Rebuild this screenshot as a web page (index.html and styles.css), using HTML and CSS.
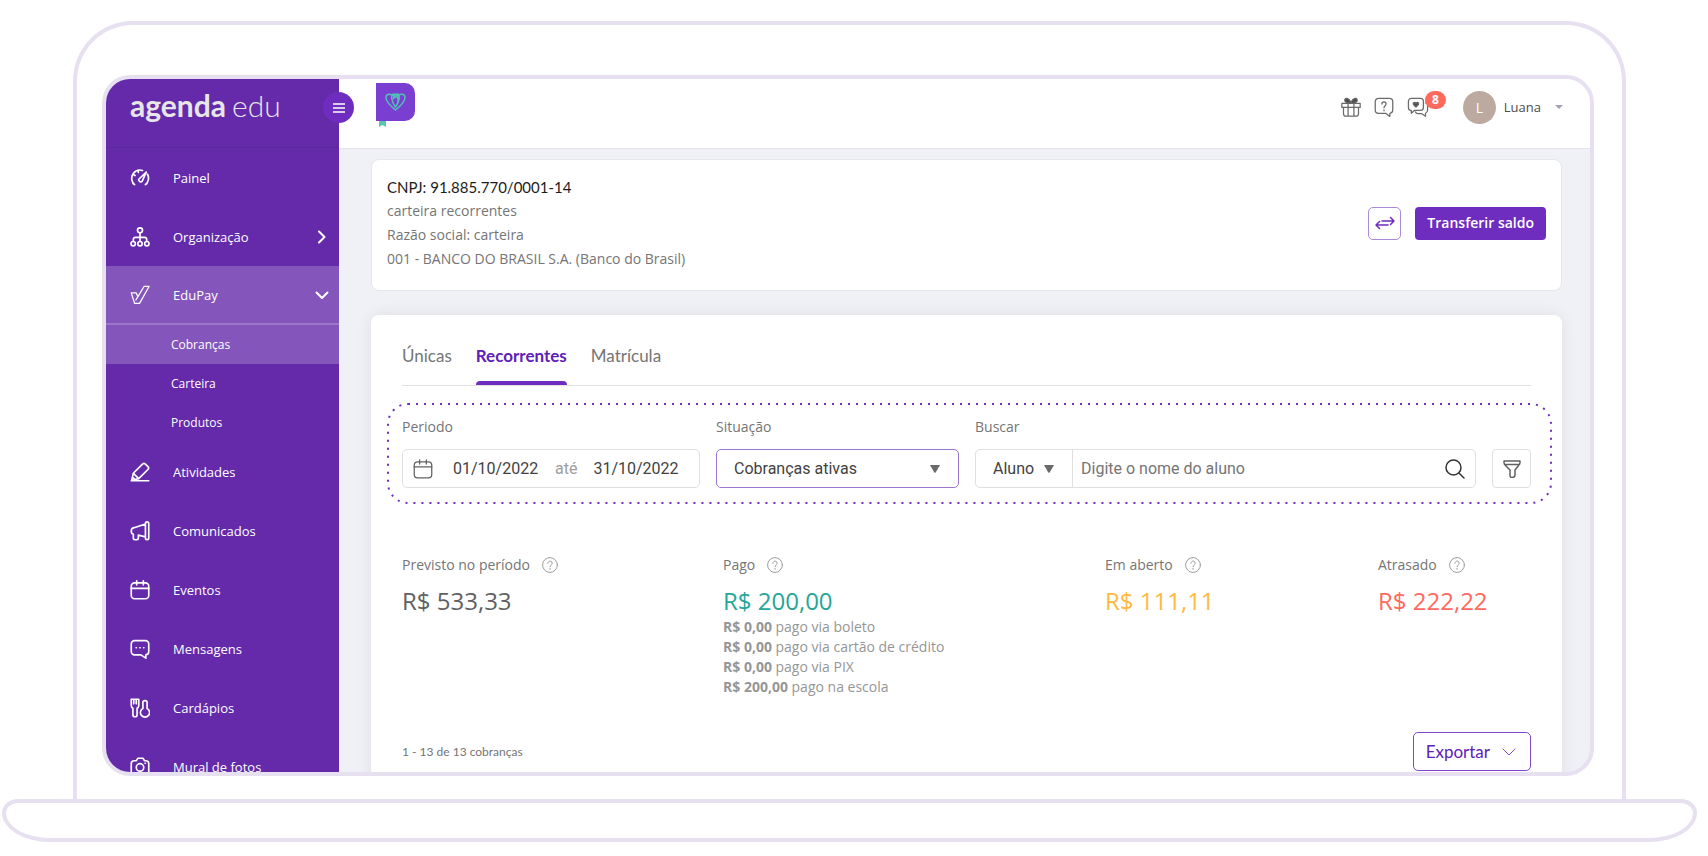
FILE: index.html
```
<!DOCTYPE html>
<html lang="pt-BR">
<head>
    <meta charset="UTF-8">
    <meta name="viewport" content="width=device-width, initial-scale=1.0">
    <title>Agenda Edu - Cobranças</title>
    <link rel="stylesheet" href="styles.css">
</head>
<body>
    <div class="laptop">
        <div class="lid">
            <div class="screen">
                <aside class="sidebar">
                    <div class="brand"><strong>agenda</strong><span>edu</span></div>
                    <button type="button" class="menu-toggle" aria-label="Menu">
                        <svg width="12" height="10" viewBox="0 0 12 10"><path d="M0 1h12M0 5h12M0 9h12"/></svg>
                    </button>
                    <nav>
                        <a href="#" class="nav-item">
                            <svg class="icon" viewBox="0 0 24 24"><path d="M5.500 20 3.600 18.600M5.500 20A10 10 0 0 1 4 6.500 10 10 0 0 1 15 3M18.500 20l1.900-1.400M18.500 20A10 10 0 0 0 21 7.500M10.500 13.500 19.500 5 14.500 16a2.500 2.500 0 0 1-4-2.500zM4.500 8l1.500 1M10 4v1.500"/></svg>
                            <span>Painel</span>
                        </a>
                        <a href="#" class="nav-item">
                            <svg class="icon" viewBox="0 0 24 24"><circle cx="12" cy="4" r="3"/><circle cx="3.800" cy="20" r="2.600"/><circle cx="12" cy="20" r="2.600"/><circle cx="20.200" cy="20" r="2.600"/><path d="M12 7v10.400M4 17.400V15a2.500 2.500 0 0 1 2.500-2.500h11A2.500 2.500 0 0 1 20 15v2.400"/></svg>
                            <span>Organização</span>
                            <svg class="chevron" viewBox="0 0 14 14"><path d="M4 1.500 9.500 7 4 12.500"/></svg>
                        </a>
                        <a href="#" class="nav-item active">
                            <svg class="icon thin" viewBox="0 0 24 24"><path d="M1.500 9.500h6L9.500 14 17 1.500h6L11.500 22H5.500zM9.500 14l-2.500 4"/></svg>
                            <span>EduPay</span>
                            <svg class="chevron" viewBox="0 0 14 14"><path d="M1.500 4.500 7 10l5.500-5.500"/></svg>
                        </a>
                        <div class="submenu">
                            <a href="#" class="active">Cobranças</a>
                            <a href="#">Carteira</a>
                            <a href="#">Produtos</a>
                        </div>
                        <a href="#" class="nav-item">
                            <svg class="icon" viewBox="0 0 24 24"><path d="M1.500 22.500h21M2 22l2-8.500L15 2.500a2.500 2.500 0 0 1 3.500 0l3 3a2.500 2.500 0 0 1 0 3.500L10.500 20 2 22zM4 13.500l6.500 6.500M3 18l3 3"/></svg>
                            <span>Atividades</span>
                        </a>
                        <a href="#" class="nav-item">
                            <svg class="icon" viewBox="0 0 24 24"><path d="M18.500 3.500 5 8a4 4 0 0 0-3.500 4c0 2 1 3.500 2.500 4v4.500a2 2 0 0 0 2 2h2a2 2 0 0 0 2-2V17l8.500 2M18.500 3a2 2 0 0 1 4 0v17.500a2 2 0 0 1-4 0z"/></svg>
                            <span>Comunicados</span>
                        </a>
                        <a href="#" class="nav-item">
                            <svg class="icon" viewBox="0 0 24 24"><rect x="1.500" y="3.500" width="21" height="19" rx="4"/><path d="M1.500 10h21M8 1v5M16 1v5"/></svg>
                            <span>Eventos</span>
                        </a>
                        <a href="#" class="nav-item">
                            <svg class="icon" viewBox="0 0 24 24"><path d="M5.500 2h13a4 4 0 0 1 4 4v9a4 4 0 0 1-3.500 4v4l-6-4H5.500a4 4 0 0 1-4-4V6a4 4 0 0 1 4-4zM7.300 10.500h.4M11.800 10.500h.4M16.300 10.500h.4"/></svg>
                            <span>Mensagens</span>
                        </a>
                        <a href="#" class="nav-item">
                            <svg class="icon" viewBox="0 0 24 24"><path d="M1.500 1.500h9v7.500a4 4 0 0 1-2 3.300V20a2.500 2.500 0 0 1-5 0v-7.700a4 4 0 0 1-2-3.300zM4.500 1.500V7M7.500 1.500V7M15.500 4.500a3 3 0 0 1 5 0v8a5.500 5.500 0 1 1-5 0z"/></svg>
                            <span>Cardápios</span>
                        </a>
                        <a href="#" class="nav-item">
                            <svg class="icon" viewBox="0 0 24 24"><path d="M5 4.500h2.500l2-3h6l2 3H19A3.500 3.500 0 0 1 22.500 8v11a3.500 3.500 0 0 1-3.500 3.500H5A3.500 3.500 0 0 1 1.500 19V8A3.500 3.500 0 0 1 5 4.500z"/><circle cx="12" cy="12.500" r="4.500"/><path d="M18 7.500h.5"/></svg>
                            <span>Mural de fotos</span>
                        </a>
                    </nav>
                </aside>

                <div class="content">
                    <header class="topbar">
                        <svg class="school-logo" width="39" height="45" viewBox="0 0 39 45">
                            <path d="M0 0h29a10 10 0 0 1 10 10v18a10 10 0 0 1-10 10H0z" fill="#7a3fd0"/>
                            <path d="M3 38h7v6l-3.500-2L3 44z" fill="#5cc6b4"/>
                            <path d="M19.500 27c-5-4-9.500-8-9.500-12.500 0-4.500 6-4.500 9.500 0 3.500-4.500 9.500-4.500 9.500 0 0 4.500-4.500 8.500-9.500 12.500zM19.500 24c-4-5-5-12-2-13 3 0 4 2 4.500 4.500.5 3-.5 6-2.500 8.500zM19.500 24c4-5 5-12 2-13-2 0-3.500 2-4 4.500" fill="none" stroke="#52bfb8" stroke-width="1.500"/>
                        </svg>
                        <div class="top-actions">
                            <button type="button" class="icon-button" aria-label="Presentes">
                                <svg width="20" height="20" viewBox="0 0 24 24"><path d="M1 7.500h22v5H1zM3 12.500h18V20a3 3 0 0 1-3 3H6a3 3 0 0 1-3-3zM8.500 7.500V23M15.500 7.500V23"/><path d="M12 7.500C8 7.500 4 6.500 4.500 3.500S9.500.5 12 6.500c2.500-6 7-6 7.500-3s-3.500 4-7.500 4z" fill="#4c4c4c"/></svg>
                            </button>
                            <button type="button" class="icon-button" aria-label="Ajuda">
                                <svg width="20" height="20" viewBox="0 0 24 24"><path d="M5.500 1.500h13a4 4 0 0 1 4 4v10a4 4 0 0 1-3.500 4v4l-5-4H5.500a4 4 0 0 1-4-4v-10a4 4 0 0 1 4-4zM9.500 8.500c0-3.500 5-3.500 5 0 0 2-2.500 2-2.500 4.500M12 15.500v1"/></svg>
                            </button>
                            <button type="button" class="icon-button" aria-label="Mensagens">
                                <svg width="22" height="20" viewBox="0 0 26 24"><path d="M5 1.500h11a3.500 3.500 0 0 1 3.500 3.500v7.500A3.500 3.500 0 0 1 16 16H9l-4 3.500V16a3.500 3.500 0 0 1-3.500-3.500V5A3.500 3.500 0 0 1 5 1.500zM22 7c2 0 2.500 1.500 2.500 3v6c0 2-1 3-2.500 3.500v3.500l-4.500-3H13c-1.500 0-2.500-.5-3-2"/><path d="M10.500 12 7.500 9c-1-2 1.500-3.500 3-1.500 1.500-2 4-.5 3 1.500z" fill="#4c4c4c"/></svg>
                                <span class="badge">8</span>
                            </button>
                            <button type="button" class="user">
                                <span class="avatar">L</span>
                                <span>Luana</span>
                                <svg width="8" height="4" viewBox="0 0 8 4"><path d="M0 0h8L4 4z" fill="#a0a3b5"/></svg>
                            </button>
                        </div>
                    </header>

                    <main>
                        <section class="card account">
                            <div class="account-info">
                                <h1>CNPJ: 91.885.770/0001-14</h1>
                                <p>carteira recorrentes</p>
                                <p>Razão social: carteira</p>
                                <p>001 - BANCO DO BRASIL S.A. (Banco do Brasil)</p>
                            </div>
                            <div class="account-actions">
                                <button type="button" class="swap-button" aria-label="Trocar carteira">
                                    <svg width="20" height="14" viewBox="0 0 20 14"><path d="M7 5h12M15.500 1.500 19 5l-3.500 3.500M13 9H1M4.500 5.500 1 9l3.500 3.500"/></svg>
                                </button>
                                <button type="button" class="primary-button">Transferir saldo</button>
                            </div>
                        </section>

                        <section class="card charges">
                            <div class="tabs">
                                <a href="#">Únicas</a>
                                <a href="#" class="active">Recorrentes</a>
                                <a href="#">Matrícula</a>
                            </div>

                            <form class="filters">
                                <svg class="filters-outline"><rect x="1" y="1" rx="20"/></svg>
                                <div class="field">
                                    <label for="start">Periodo</label>
                                    <div class="control period">
                                        <svg width="20" height="20" viewBox="0 0 24 24"><rect x="1.500" y="3.500" width="21" height="19" rx="4"/><path d="M1.500 9.500h21M8 1v5M16 1v5"/></svg>
                                        <input type="text" id="start" value="01/10/2022">
                                        <span>até</span>
                                        <input type="text" id="end" value="31/10/2022" aria-label="Fim do periodo">
                                    </div>
                                </div>
                                <div class="field">
                                    <label for="status">Situação</label>
                                    <div class="control status">
                                        <select id="status"><option>Cobranças ativas</option></select>
                                        <svg width="10" height="8" viewBox="0 0 10 8"><path class="arrow" d="M0 0h10L5.800 7.200a1 1 0 0 1-1.600 0z"/></svg>
                                    </div>
                                </div>
                                <div class="field">
                                    <label for="search">Buscar</label>
                                    <div class="control search">
                                        <div class="search-type">
                                            <select aria-label="Buscar por"><option>Aluno</option></select>
                                            <svg width="10" height="8" viewBox="0 0 10 8"><path class="arrow" d="M0 0h10L5.800 7.200a1 1 0 0 1-1.600 0z"/></svg>
                                        </div>
                                        <input type="text" id="search" placeholder="Digite o nome do aluno">
                                        <button type="submit" aria-label="Buscar aluno">
                                            <svg width="20" height="20" viewBox="0 0 20 20"><circle cx="8.500" cy="8.500" r="7.500"/><path d="m14 14 5 5"/></svg>
                                        </button>
                                    </div>
                                </div>
                                <button type="button" class="filter-button" aria-label="Filtrar">
                                    <svg width="18" height="18" viewBox="0 0 18 18"><path d="M1 1h16v1.500q0 1.500-1.500 3L12 10v5c0 1.500-1.500 2.500-3 2.500S7 16.500 7 15.500V10L2.500 5.500Q1 4 1 2.500zM1.500 4.500h15"/></svg>
                                </button>
                            </form>

                            <div class="stats">
                                <div>
                                    <h2>Previsto no período <svg class="help" viewBox="0 0 16 16"><circle cx="8" cy="8" r="7.400"/><path d="M5.800 6.300c0-3 4.400-3 4.400 0 0 1.700-2.200 1.600-2.200 3.300M8 11.200v1.200"/></svg></h2>
                                    <p class="value">R$ 533,33</p>
                                </div>
                                <div>
                                    <h2>Pago <svg class="help" viewBox="0 0 16 16"><circle cx="8" cy="8" r="7.400"/><path d="M5.800 6.300c0-3 4.400-3 4.400 0 0 1.700-2.200 1.600-2.200 3.300M8 11.200v1.200"/></svg></h2>
                                    <p class="value paid">R$ 200,00</p>
                                    <ul>
                                        <li><strong>R$ 0,00</strong> pago via boleto</li>
                                        <li><strong>R$ 0,00</strong> pago via cartão de crédito</li>
                                        <li><strong>R$ 0,00</strong> pago via PIX</li>
                                        <li><strong>R$ 200,00</strong> pago na escola</li>
                                    </ul>
                                </div>
                                <div>
                                    <h2>Em aberto <svg class="help" viewBox="0 0 16 16"><circle cx="8" cy="8" r="7.400"/><path d="M5.800 6.300c0-3 4.400-3 4.400 0 0 1.700-2.200 1.600-2.200 3.300M8 11.200v1.200"/></svg></h2>
                                    <p class="value open">R$ 111,11</p>
                                </div>
                                <div>
                                    <h2>Atrasado <svg class="help" viewBox="0 0 16 16"><circle cx="8" cy="8" r="7.400"/><path d="M5.800 6.300c0-3 4.400-3 4.400 0 0 1.700-2.200 1.600-2.200 3.300M8 11.200v1.200"/></svg></h2>
                                    <p class="value late">R$ 222,22</p>
                                </div>
                            </div>

                            <div class="list-header">
                                <p>1 - 13 de 13 cobranças</p>
                                <button type="button" class="export-button">Exportar
                                    <svg width="14" height="8" viewBox="0 0 14 8"><path d="m1 1 6 6 6-6"/></svg>
                                </button>
                            </div>
                        </section>
                    </main>
                </div>
            </div>
        </div>
        <div class="base"></div>
    </div>
</body>
</html>
```
FILE: styles.css
```
* {
    box-sizing: border-box;
}

body {
    margin: 0;
    background: #fff;
    color: #757575;
    font-family: "Open Sans", "Noto Sans", sans-serif;
    font-size: 14px;
}

h1, h2, p, ul {
    margin: 0;
    padding: 0;
    font-weight: normal;
}

a {
    text-decoration: none;
    color: inherit;
}

button, input, select {
    font: inherit;
    color: inherit;
    border: none;
    padding: 0;
    margin: 0;
    background: none;
    outline: none;
}

button {
    cursor: pointer;
}

svg {
    flex: none;
    fill: none;
    stroke-linecap: round;
    stroke-linejoin: round;
}

/* Laptop frame */
.laptop {
    padding-top: 21px;
}

.lid {
    margin: 0 82px 0 73px;
    padding: 50px 28px 23px 25px;
    border: 4px solid #e6e0f0;
    border-bottom: none;
    border-radius: 60px 60px 0 0;
}

.base {
    height: 43px;
    margin: 0 11px 0 2px;
    border: 4px solid #e6e0f0;
    border-radius: 16px 16px 48px 48px / 14px 14px 29px 29px;
}

.screen {
    display: flex;
    height: calc(100vh - 155px);
    border: 4px solid #e6e0f0;
    border-radius: 28px;
    overflow: hidden;
    background: #f0f1f6;
}

/* Sidebar */
.sidebar {
    position: relative;
    z-index: 1;
    flex: none;
    width: 233px;
    background: #642aaa;
    color: #fff;
    font-size: 13px;
}

.brand {
    display: flex;
    gap: 6px;
    height: 69px;
    padding: 7px 24px;
    border-bottom: 1px solid #5d27a0;
    color: #e8e6e8;
    font-family: Lato, sans-serif;
    font-size: 30px;
    font-weight: 300;
    line-height: 38px;
    white-space: nowrap;
}

.brand strong {
    font-weight: bold;
}

.menu-toggle {
    position: absolute;
    top: 13px;
    right: -15px;
    display: flex;
    align-items: center;
    justify-content: center;
    width: 31px;
    height: 31px;
    border-radius: 50%;
    background: #6e2dbe;
}

.menu-toggle svg {
    stroke: #fff;
    stroke-width: 1.5;
}

.nav-item {
    display: flex;
    align-items: center;
    gap: 23px;
    height: 59px;
    padding: 0 10px 0 24px;
}

.nav-item.active {
    border-bottom: 2px solid #9a75c9;
}

.nav-item.active, .submenu .active {
    background-color: #8456bc;
}

.icon {
    width: 20px;
    height: 20px;
    stroke: #fff;
    stroke-width: 2;
}

.icon.thin {
    stroke-width: 1.5;
}

.chevron {
    width: 14px;
    height: 14px;
    margin-left: auto;
    stroke: #fff;
    stroke-width: 2;
}

.submenu {
    font-size: 12px;
}

.submenu a {
    display: block;
    padding-left: 65px;
    line-height: 39px;
}

/* Top bar */
.content {
    flex: 1;
    min-width: 0;
}

.topbar {
    display: flex;
    justify-content: space-between;
    height: 70px;
    padding: 4px 27px 0 37px;
    border-bottom: 1px solid #e4e4ea;
    background: #fff;
}

.top-actions {
    display: flex;
    align-items: center;
    gap: 13px;
    height: 48px;
}

.icon-button {
    position: relative;
    display: flex;
}

.icon-button svg {
    stroke: #6a6a6a;
    stroke-width: 1.5;
}

.badge {
    position: absolute;
    top: -6px;
    left: 18px;
    width: 21px;
    border-radius: 9px;
    background: #ff6a5f;
    color: #fff;
    font-size: 12px;
    font-weight: bold;
    line-height: 18px;
}

.user {
    display: flex;
    align-items: center;
    gap: 8px;
    margin-left: 21px;
    color: #4c4c4c;
    font-size: 13px;
    font-weight: 500;
}

.user svg {
    margin-left: 6px;
}

.avatar {
    width: 33px;
    border-radius: 50%;
    background: #bcaaa1;
    color: #fff;
    font-size: 14px;
    line-height: 33px;
}

/* Cards */
main {
    display: flex;
    flex-direction: column;
    gap: 24px;
    padding: 10px 28px 24px 32px;
}

.card {
    border-radius: 8px;
    background: #fff;
}

.account {
    display: flex;
    align-items: center;
    justify-content: space-between;
    padding: 15px 15px 19px;
    border: 1px solid #e6e6ea;
    line-height: 24px;
}

.account h1 {
    color: #1c1c1c;
    font-family: Lato, sans-serif;
    font-size: 15px;
}

.account-actions {
    display: flex;
    align-items: center;
    gap: 14px;
}

.swap-button {
    display: flex;
    align-items: center;
    justify-content: center;
    width: 33px;
    height: 33px;
    border: 1px solid #a98ad6;
    border-radius: 5px;
}

.swap-button svg {
    stroke: #6e2dbe;
    stroke-width: 1.5;
}

.primary-button {
    height: 33px;
    padding: 0 12px;
    border-radius: 4px;
    background: #6e2dbe;
    color: #fff;
    font-weight: 600;
}

.charges {
    padding: 29px 31px 24px;
    box-shadow: 0 0 16px rgba(0, 0, 0, 0.08);
}

/* Tabs */
.tabs {
    display: flex;
    gap: 24px;
    border-bottom: 1px solid #e0e0e0;
    font-family: Lato, sans-serif;
    font-size: 17px;
    line-height: 24px;
}

.tabs a {
    padding-bottom: 17px;
}

.tabs .active {
    padding-bottom: 0;
    color: #6020b8;
    font-weight: bold;
}

.tabs .active::after {
    content: "";
    display: block;
    height: 4px;
    margin-top: 13px;
    border-radius: 4px 4px 0 0;
    background: #6e2dbe;
}

/* Filters */
.filters {
    position: relative;
    display: grid;
    grid-template-columns: 298px 243px 1fr 39px;
    gap: 16px;
    align-items: end;
    margin: 17px -21px 0 -15px;
    padding: 14px 21px 16px 15px;
}

.filters-outline {
    position: absolute;
    inset: 0;
    width: 100%;
    height: 100%;
    pointer-events: none;
}

.filters-outline rect {
    width: calc(100% - 2px);
    height: calc(100% - 2px);
    stroke: #6e2dbe;
    stroke-width: 2;
    stroke-linecap: butt;
    stroke-dasharray: 2 6;
}

.field label {
    display: block;
    margin-bottom: 12px;
    line-height: 20px;
}

.control {
    display: flex;
    align-items: center;
    height: 39px;
    border: 1px solid #e0e0e0;
    border-radius: 5px;
    color: #424242;
    font-family: Roboto, sans-serif;
    font-size: 16px;
}

.control svg {
    stroke: #616161;
    stroke-width: 1.5;
}

.control .arrow {
    fill: #6a6a6a;
    stroke: none;
}

.control select {
    flex: 1;
    appearance: none;
}

.period {
    padding: 0 10px;
}

.period input {
    width: 88px;
}

.period input:first-of-type {
    margin-left: 20px;
}

.period span {
    margin: 0 16px 0 14px;
    color: #9e9e9e;
}

.status {
    padding: 0 18px 0 17px;
    border-color: #9b76d2;
}

.search-type {
    display: flex;
    align-items: center;
    align-self: stretch;
    width: 97px;
    padding: 0 18px 0 17px;
    border-right: 1px solid #e0e0e0;
}

.search input {
    flex: 1;
    min-width: 0;
    padding-left: 8px;
}

.search input::placeholder {
    color: #757575;
    opacity: 1;
}

.search button {
    display: flex;
    margin-right: 10px;
}

.search button svg {
    stroke: #333;
}

.filter-button {
    display: flex;
    align-items: center;
    justify-content: center;
    height: 39px;
    border: 1px solid #e0e0e0;
    border-radius: 4px;
}

.filter-button svg {
    stroke: #616161;
    stroke-width: 1.5;
}

/* Totals */
.stats {
    display: grid;
    grid-template-columns: 321fr 382fr 273fr 153fr;
    margin-top: 51px;
}

.stats h2 {
    display: flex;
    align-items: center;
    gap: 12px;
    margin-bottom: 10px;
    font-size: 14px;
    line-height: 20px;
}

.help {
    width: 16px;
    height: 16px;
    stroke: #9e9e9e;
}

.value {
    color: #616161;
    font-size: 24px;
    line-height: 32px;
}

.value.paid {
    color: #26a69a;
}

.value.open {
    color: #ffb940;
}

.value.late {
    color: #ff6a5f;
}

.stats ul {
    color: #969696;
    line-height: 20px;
    list-style: none;
}

.list-header {
    display: flex;
    align-items: center;
    justify-content: space-between;
    margin-top: 35px;
    font-family: Lato, sans-serif;
}

.list-header p {
    font-size: 12px;
}

.export-button {
    display: flex;
    align-items: center;
    gap: 12px;
    height: 39px;
    padding: 0 14px 0 12px;
    border: 1px solid #8149c9;
    border-radius: 5px;
    color: #6020b8;
    font-size: 17px;
}

.export-button svg {
    stroke: #8149c9;
}
```
